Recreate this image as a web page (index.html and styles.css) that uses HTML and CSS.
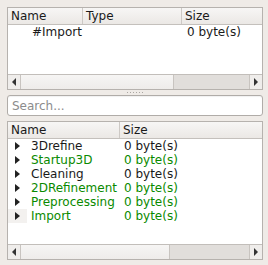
FILE: index.html
```html
<!DOCTYPE html>
<html lang="en">
<head>
  <meta charset="UTF-8" />
  <title>Data Browser</title>
  <link rel="stylesheet" href="styles.css">
</head>
<body>
  <div class="dock">
    <div class="panel panel-top">
      <div class="header cols-top">
        <div class="hcell">Name</div>
        <div class="hcell">Type</div>
        <div class="hcell">Size</div>
      </div>
      <div class="rows">
        <div class="row cols-top">
          <div class="cell indent">#Import</div>
          <div class="cell"></div>
          <div class="cell size">0 byte(s)</div>
        </div>
      </div>
      <div class="hscroll hs-top">
        <div class="sbtn"><span class="arrow-left"></span></div>
        <div class="handle"></div>
        <div class="trough"></div>
        <div class="sbtn"><span class="arrow-right"></span></div>
      </div>
    </div>

    <div class="splitter"><div class="grip"></div></div>

    <input class="search" type="text" placeholder="Search...">

    <div class="panel panel-bottom">
      <div class="header cols-bottom">
        <div class="hcell">Name</div>
        <div class="hcell">Size</div>
      </div>
      <div class="rows">
        <div class="row cols-bottom">
          <div class="cell"><span class="branch"></span>3Drefine</div>
          <div class="cell size">0 byte(s)</div>
        </div>
        <div class="row cols-bottom green">
          <div class="cell"><span class="branch"></span>Startup3D</div>
          <div class="cell size">0 byte(s)</div>
        </div>
        <div class="row cols-bottom">
          <div class="cell"><span class="branch"></span>Cleaning</div>
          <div class="cell size">0 byte(s)</div>
        </div>
        <div class="row cols-bottom green">
          <div class="cell"><span class="branch"></span>2DRefinement</div>
          <div class="cell size">0 byte(s)</div>
        </div>
        <div class="row cols-bottom green">
          <div class="cell"><span class="branch"></span>Preprocessing</div>
          <div class="cell size">0 byte(s)</div>
        </div>
        <div class="row cols-bottom green">
          <div class="cell"><span class="branch hover"></span>Import</div>
          <div class="cell size">0 byte(s)</div>
        </div>
      </div>
      <div class="hscroll hs-bottom">
        <div class="sbtn"><span class="arrow-left"></span></div>
        <div class="handle"></div>
        <div class="trough"></div>
        <div class="sbtn"><span class="arrow-right"></span></div>
      </div>
    </div>
  </div>
</body>
</html>
```

FILE: styles.css
```css
body {
  margin: 0;
  padding: 0;
  background: #efebe7;
  font-family: 'DejaVu Sans', Verdana, sans-serif;
  font-size: 12px;
  color: #1a1a1a;
}

.dock {
  display: flex;
  flex-direction: column;
  margin: 7px 5px 0 7px;
  width: 256px;
}

.panel {
  display: flex;
  flex-direction: column;
  background: #fff;
  border: 1px solid #b6b2ae;
  box-sizing: border-box;
}

.panel-top {
  height: 83px;
}

.panel-bottom {
  height: 139px;
}

.cols-top {
  display: grid;
  grid-template-columns: 75px 99px 1fr;
}

.cols-bottom {
  display: grid;
  grid-template-columns: 112px 1fr;
}

.header {
  height: 17px;
  border-bottom: 1px solid #c4c0bc;
  background: linear-gradient(#f7f6f5, #ebe8e5);
  box-sizing: border-box;
}

.hcell {
  padding-left: 3px;
  line-height: 16px;
  border-right: 1px solid #cdc9c5;
}

.hcell:last-child {
  border-right: none;
}

.rows {
  flex: 1;
}

.row {
  height: 14px;
  line-height: 14px;
}

.cell {
  white-space: nowrap;
  overflow: hidden;
  display: flex;
  align-items: center;
}

.indent {
  padding-left: 24px;
}

.size {
  padding-left: 4px;
}

.cols-top .size {
  padding-left: 5px;
}

.green {
  color: #0a8a00;
}

.branch {
  width: 19px;
  height: 14px;
  margin-right: 4px;
  position: relative;
  flex: none;
}

.branch::after {
  content: "";
  position: absolute;
  left: 7px;
  top: 3px;
  border-left: 5px solid #222;
  border-top: 4px solid transparent;
  border-bottom: 4px solid transparent;
}

.branch.hover {
  background: #f3f1ef;
}

.hscroll {
  display: grid;
  grid-template-columns: 13px 1fr 1fr 13px;
  height: 15px;
  border-top: 1px solid #c2beba;
  background: #e3e0dd;
  box-sizing: border-box;
}

.hs-top {
  grid-template-columns: 13px 153px 1fr 13px;
}

.hs-bottom {
  grid-template-columns: 13px 149px 1fr 13px;
}

.sbtn {
  background: #efedeb;
  display: flex;
  align-items: center;
  justify-content: center;
}

.sbtn:first-child {
  border-right: 1px solid #c8c4c0;
}

.sbtn:last-child {
  border-left: 1px solid #c8c4c0;
}

.handle {
  background: linear-gradient(#f6f5f4, #eeecea);
  border-right: 1px solid #c8c4c0;
}

.trough {
  background: #e1dedb;
}

.arrow-left {
  border-right: 4px solid #333;
  border-top: 4px solid transparent;
  border-bottom: 4px solid transparent;
}

.arrow-right {
  border-left: 4px solid #333;
  border-top: 4px solid transparent;
  border-bottom: 4px solid transparent;
}

.splitter {
  height: 5px;
  display: flex;
  justify-content: center;
  align-items: center;
}

.grip {
  width: 17px;
  height: 1px;
  background: repeating-linear-gradient(to right, #aaa6a2 0 1px, transparent 1px 3px);
}

.search {
  height: 21px;
  margin: 0 0 5px 0;
  padding: 0 4px;
  border: 1px solid #b0aca8;
  border-radius: 3px;
  background: #fff;
  box-shadow: inset 0 1px 1px rgba(0, 0, 0, 0.06);
  font-family: 'DejaVu Sans', Verdana, sans-serif;
  font-size: 12px;
  box-sizing: border-box;
  outline: none;
}

.search::placeholder {
  color: #8c8c8c;
}
```
